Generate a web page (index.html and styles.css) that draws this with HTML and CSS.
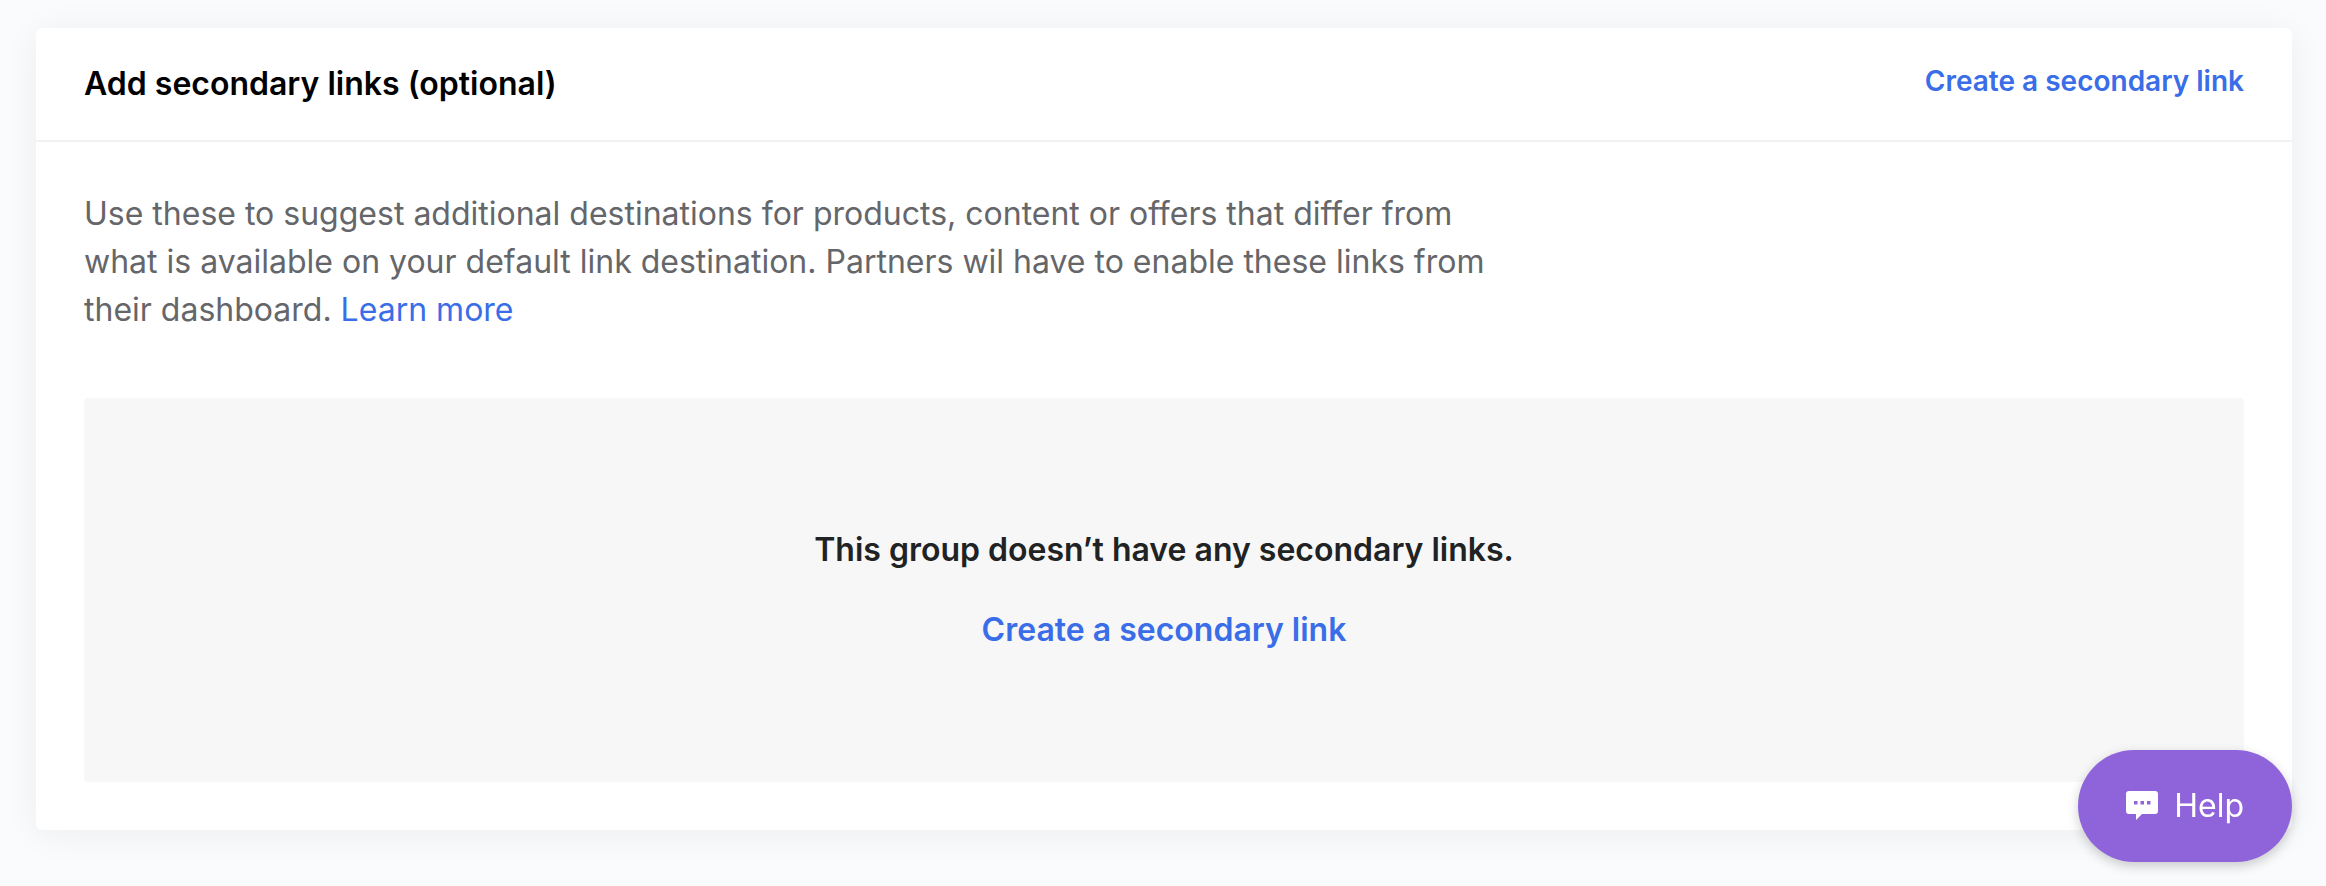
FILE: index.html
```html
<!DOCTYPE html>
<html lang="en">
<head>
<meta charset="utf-8">
<title>Secondary links</title>
<link rel="stylesheet" href="styles.css">
</head>
<body>
<main class="page">
  <section class="card">
    <header class="card-header">
      <h2 class="card-title">Add secondary links (optional)</h2>
      <a class="header-link" href="#create">Create a secondary link</a>
    </header>
    <div class="card-body">
      <p class="intro">Use these to suggest additional destinations for products, content or offers that differ from what is available on your default link destination. Partners wil have to enable these links from their dashboard. <a class="link" href="#learn">Learn more</a></p>
      <div class="empty">
        <p class="empty-title">This group doesn’t have any secondary links.</p>
        <a class="empty-link" href="#create">Create a secondary link</a>
      </div>
    </div>
  </section>
</main>
<button class="help" type="button">
  <svg class="help-icon" viewBox="0 0 32 32" aria-hidden="true">
    <path fill="#fff" fill-rule="evenodd" d="M3 1h26a3 3 0 0 1 3 3v17a3 3 0 0 1-3 3H16L10 30v-6H3a3 3 0 0 1-3-3V4a3 3 0 0 1 3-3zM8 11v3.500h3.500V11zm6.500 0v3.500H18V11zm6.500 0v3.500h3.500V11z"/>
  </svg>
  Help
</button>
</body>
</html>
```
FILE: styles.css
```css
* {
  box-sizing: border-box;
}

body {
  margin: 0;
  background: #fafbfd;
  color: #202223;
  font-family: Inter, "Liberation Sans", sans-serif;
  font-size: 32px;
  line-height: 48px;
}

a {
  color: #3a6de8;
  text-decoration: none;
}

.page {
  padding: 28px 34px 56px 36px;
}

.card {
  background: #fff;
  border-radius: 6px;
  box-shadow: 0 4px 36px rgba(40, 40, 20, 0.06);
}

.card-header {
  display: flex;
  align-items: flex-start;
  justify-content: space-between;
  padding: 32px 48px;
  border-bottom: 2px solid #f2f2f2;
}

.card-title {
  margin: 0;
  color: #000;
  font-size: 32px;
  font-weight: 600;
}

.header-link {
  font-size: 28px;
  font-weight: 600;
  line-height: 42px;
}

.card-body {
  padding: 48px;
}

.intro {
  max-width: 1440px;
  margin: 0 0 64px;
  color: #65666a;
}

.empty {
  display: flex;
  flex-direction: column;
  align-items: center;
  gap: 32px;
  padding: 128px 48px;
  background: #f7f7f7;
  border-radius: 4px;
}

.empty-title {
  margin: 0;
  font-weight: 600;
}

.empty-link {
  font-weight: 600;
}

.help {
  position: fixed;
  right: 34px;
  bottom: 24px;
  display: flex;
  align-items: center;
  gap: 16px;
  padding: 32px 48px;
  border: 0;
  border-radius: 56px;
  background: #8f64db;
  box-shadow: 0 4px 12px rgba(0, 0, 0, 0.2);
  color: #fff;
  font: inherit;
}

.help-icon {
  width: 32px;
  height: 32px;
}
```
